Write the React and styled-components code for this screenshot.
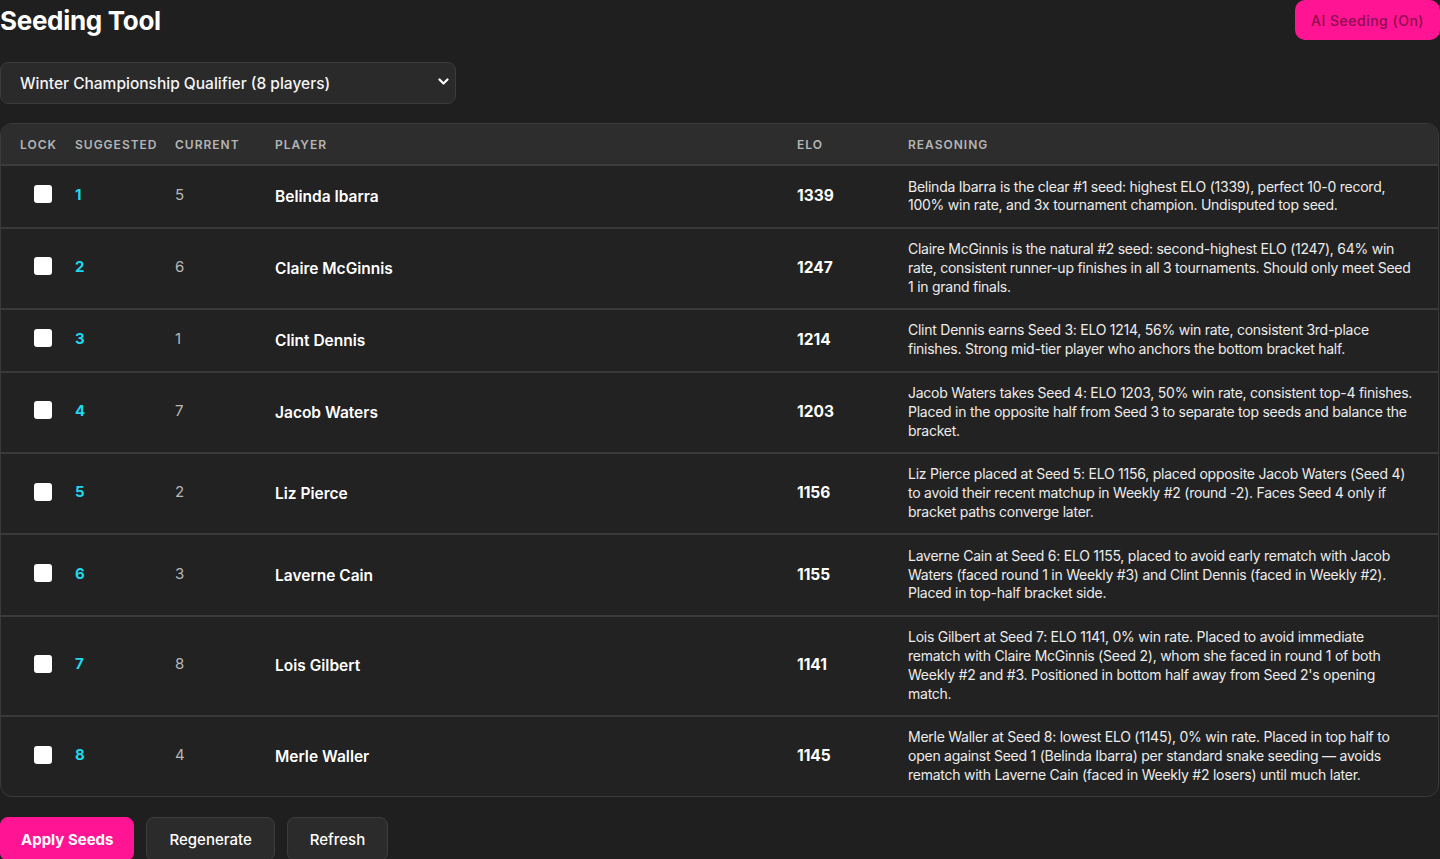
import React, { useState } from "react";
import styled, { createGlobalStyle } from "styled-components";

const GlobalStyle = createGlobalStyle`
  * { box-sizing: border-box; }
  body {
    margin: 0;
    background: #1f1f1f;
    color: #f2f2f2;
    font-family: Inter, "Noto Sans", sans-serif;
  }
`;

const seeds = [
  { seed: 1, current: 5, name: "Belinda Ibarra", elo: 1339, reason: "Belinda Ibarra is the clear #1 seed: highest ELO (1339), perfect 10-0 record, 100% win rate, and 3x tournament champion. Undisputed top seed." },
  { seed: 2, current: 6, name: "Claire McGinnis", elo: 1247, reason: "Claire McGinnis is the natural #2 seed: second-highest ELO (1247), 64% win rate, consistent runner-up finishes in all 3 tournaments. Should only meet Seed 1 in grand finals." },
  { seed: 3, current: 1, name: "Clint Dennis", elo: 1214, reason: "Clint Dennis earns Seed 3: ELO 1214, 56% win rate, consistent 3rd-place finishes. Strong mid-tier player who anchors the bottom bracket half." },
  { seed: 4, current: 7, name: "Jacob Waters", elo: 1203, reason: "Jacob Waters takes Seed 4: ELO 1203, 50% win rate, consistent top-4 finishes. Placed in the opposite half from Seed 3 to separate top seeds and balance the bracket." },
  { seed: 5, current: 2, name: "Liz Pierce", elo: 1156, reason: "Liz Pierce placed at Seed 5: ELO 1156, placed opposite Jacob Waters (Seed 4) to avoid their recent matchup in Weekly #2 (round -2). Faces Seed 4 only if bracket paths converge later." },
  { seed: 6, current: 3, name: "Laverne Cain", elo: 1155, reason: "Laverne Cain at Seed 6: ELO 1155, placed to avoid early rematch with Jacob Waters (faced round 1 in Weekly #3) and Clint Dennis (faced in Weekly #2). Placed in top-half bracket side." },
  { seed: 7, current: 8, name: "Lois Gilbert", elo: 1141, reason: "Lois Gilbert at Seed 7: ELO 1141, 0% win rate. Placed to avoid immediate rematch with Claire McGinnis (Seed 2), whom she faced in round 1 of both Weekly #2 and #3. Positioned in bottom half away from Seed 2's opening match." },
  { seed: 8, current: 4, name: "Merle Waller", elo: 1145, reason: "Merle Waller at Seed 8: lowest ELO (1145), 0% win rate. Placed in top half to open against Seed 1 (Belinda Ibarra) per standard snake seeding — avoids rematch with Laverne Cain (faced in Weekly #2 losers) until much later." },
];

const Page = styled.div`
  display: flex;
  flex-direction: column;
`;

const Header = styled.header`
  display: flex;
  justify-content: space-between;
  align-items: center;
  height: 40px;
`;

const Title = styled.h1`
  margin: 0;
  font-size: 26px;
  font-weight: 700;
  letter-spacing: -0.3px;
  color: #ffffff;
`;

const AiButton = styled.button`
  height: 40px;
  padding: 0 16px;
  border: none;
  border-radius: 10px;
  background: #ff1493;
  color: #8e0f50;
  font-family: inherit;
  font-size: 14px;
  font-weight: 500;
  letter-spacing: 0.5px;
`;

const SelectWrap = styled.div`
  position: relative;
  width: 456px;
  margin-top: 22px;
`;

const Select = styled.select`
  appearance: none;
  width: 100%;
  height: 42px;
  padding: 0 19px;
  border: 1px solid #3b3b3b;
  border-radius: 8px;
  background: #2a2a2a;
  color: #f5f5f5;
  font-family: inherit;
  font-size: 15.5px;
  font-weight: 500;
`;

const Chevron = styled.svg`
  position: absolute;
  right: 7px;
  top: 16px;
  pointer-events: none;
`;

const TableBox = styled.div`
  margin-top: 19px;
  width: 1439px;
  border: 1px solid #3a3a3a;
  border-radius: 12px;
  overflow: hidden;
  background: #222222;
`;

const Table = styled.table`
  width: 100%;
  border-collapse: collapse;
  table-layout: fixed;
`;

const Th = styled.th`
  width: ${(p) => p.$w}px;
  height: 41px;
  padding: 0 0 0 19px;
  text-align: left;
  background: #2d2d2d;
  border-bottom: 2px solid #3c3c3c;
  color: #b5b5b5;
  font-size: 12px;
  font-weight: 600;
  letter-spacing: 1px;
  text-transform: uppercase;
`;

const Row = styled.tr`
  border-bottom: 2px solid #3a3a3a;
  &:last-child { border-bottom: none; }
`;

const Td = styled.td`
  padding: 11.5px 0 11.5px 19px;
  vertical-align: middle;
`;

const Check = styled.input`
  appearance: none;
  display: block;
  width: 18px;
  height: 18px;
  margin: 0 0 4px 14px;
  border-radius: 3px;
  background: #ffffff;
`;

const SeedNum = styled.span`
  display: block;
  margin-bottom: 4px;
  color: #1ed8f0;
  font-size: 15px;
  font-weight: 700;
`;

const Current = styled.span`
  display: block;
  margin-bottom: 4px;
  color: #b8b8b8;
  font-size: 15px;
`;

const Name = styled.span`
  display: block;
  color: #ffffff;
  font-size: 15.5px;
  font-weight: 600;
`;

const Elo = styled.span`
  display: block;
  margin-bottom: 2px;
  color: #ffffff;
  font-size: 15.5px;
  font-weight: 700;
`;

const Reason = styled.p`
  margin: 0;
  padding-right: 22px;
  color: #ececec;
  font-size: 14px;
  line-height: 18.8px;
  letter-spacing: -0.25px;
`;

const Actions = styled.div`
  display: flex;
  gap: 12px;
  margin-top: 20px;
`;

const Button = styled.button`
  height: 44px;
  padding: 0 ${(p) => (p.$primary ? 20 : 22)}px;
  border-radius: 8px;
  border: 1px solid ${(p) => (p.$primary ? "#ff1493" : "#3d3d3d")};
  background: ${(p) => (p.$primary ? "#ff1493" : "#2b2b2b")};
  color: #ffffff;
  font-family: inherit;
  font-size: 15px;
  font-weight: ${(p) => (p.$primary ? 700 : 500)};
`;

const cols = [
  { label: "Lock", w: 55 },
  { label: "Suggested", w: 100 },
  { label: "Current", w: 100 },
  { label: "Player", w: 522 },
  { label: "ELO", w: 111 },
  { label: "Reasoning", w: 551 },
];

export default function App() {
  const [locked, setLocked] = useState({});
  return (
    <Page>
      <GlobalStyle />
      <Header>
        <Title>Seeding Tool</Title>
        <AiButton>AI Seeding (On)</AiButton>
      </Header>
      <SelectWrap>
        <Select defaultValue="winter">
          <option value="winter">Winter Championship Qualifier (8 players)</option>
        </Select>
        <Chevron width="11" height="8" viewBox="0 0 11 8" fill="none">
          <path d="M1.5 1.5l4 4 4-4" stroke="#fff" strokeWidth="2.2" strokeLinecap="round" strokeLinejoin="round" />
        </Chevron>
      </SelectWrap>
      <TableBox>
        <Table>
          <thead>
            <tr>
              {cols.map((c) => (
                <Th key={c.label} $w={c.w}>{c.label}</Th>
              ))}
            </tr>
          </thead>
          <tbody>
            {seeds.map((s) => (
              <Row key={s.seed}>
                <Td>
                  <Check
                    type="checkbox"
                    checked={!!locked[s.seed]}
                    onChange={() => setLocked({ ...locked, [s.seed]: !locked[s.seed] })}
                  />
                </Td>
                <Td><SeedNum>{s.seed}</SeedNum></Td>
                <Td><Current>{s.current}</Current></Td>
                <Td><Name>{s.name}</Name></Td>
                <Td><Elo>{s.elo}</Elo></Td>
                <Td><Reason>{s.reason}</Reason></Td>
              </Row>
            ))}
          </tbody>
        </Table>
      </TableBox>
      <Actions>
        <Button $primary>Apply Seeds</Button>
        <Button>Regenerate</Button>
        <Button>Refresh</Button>
      </Actions>
    </Page>
  );
}
